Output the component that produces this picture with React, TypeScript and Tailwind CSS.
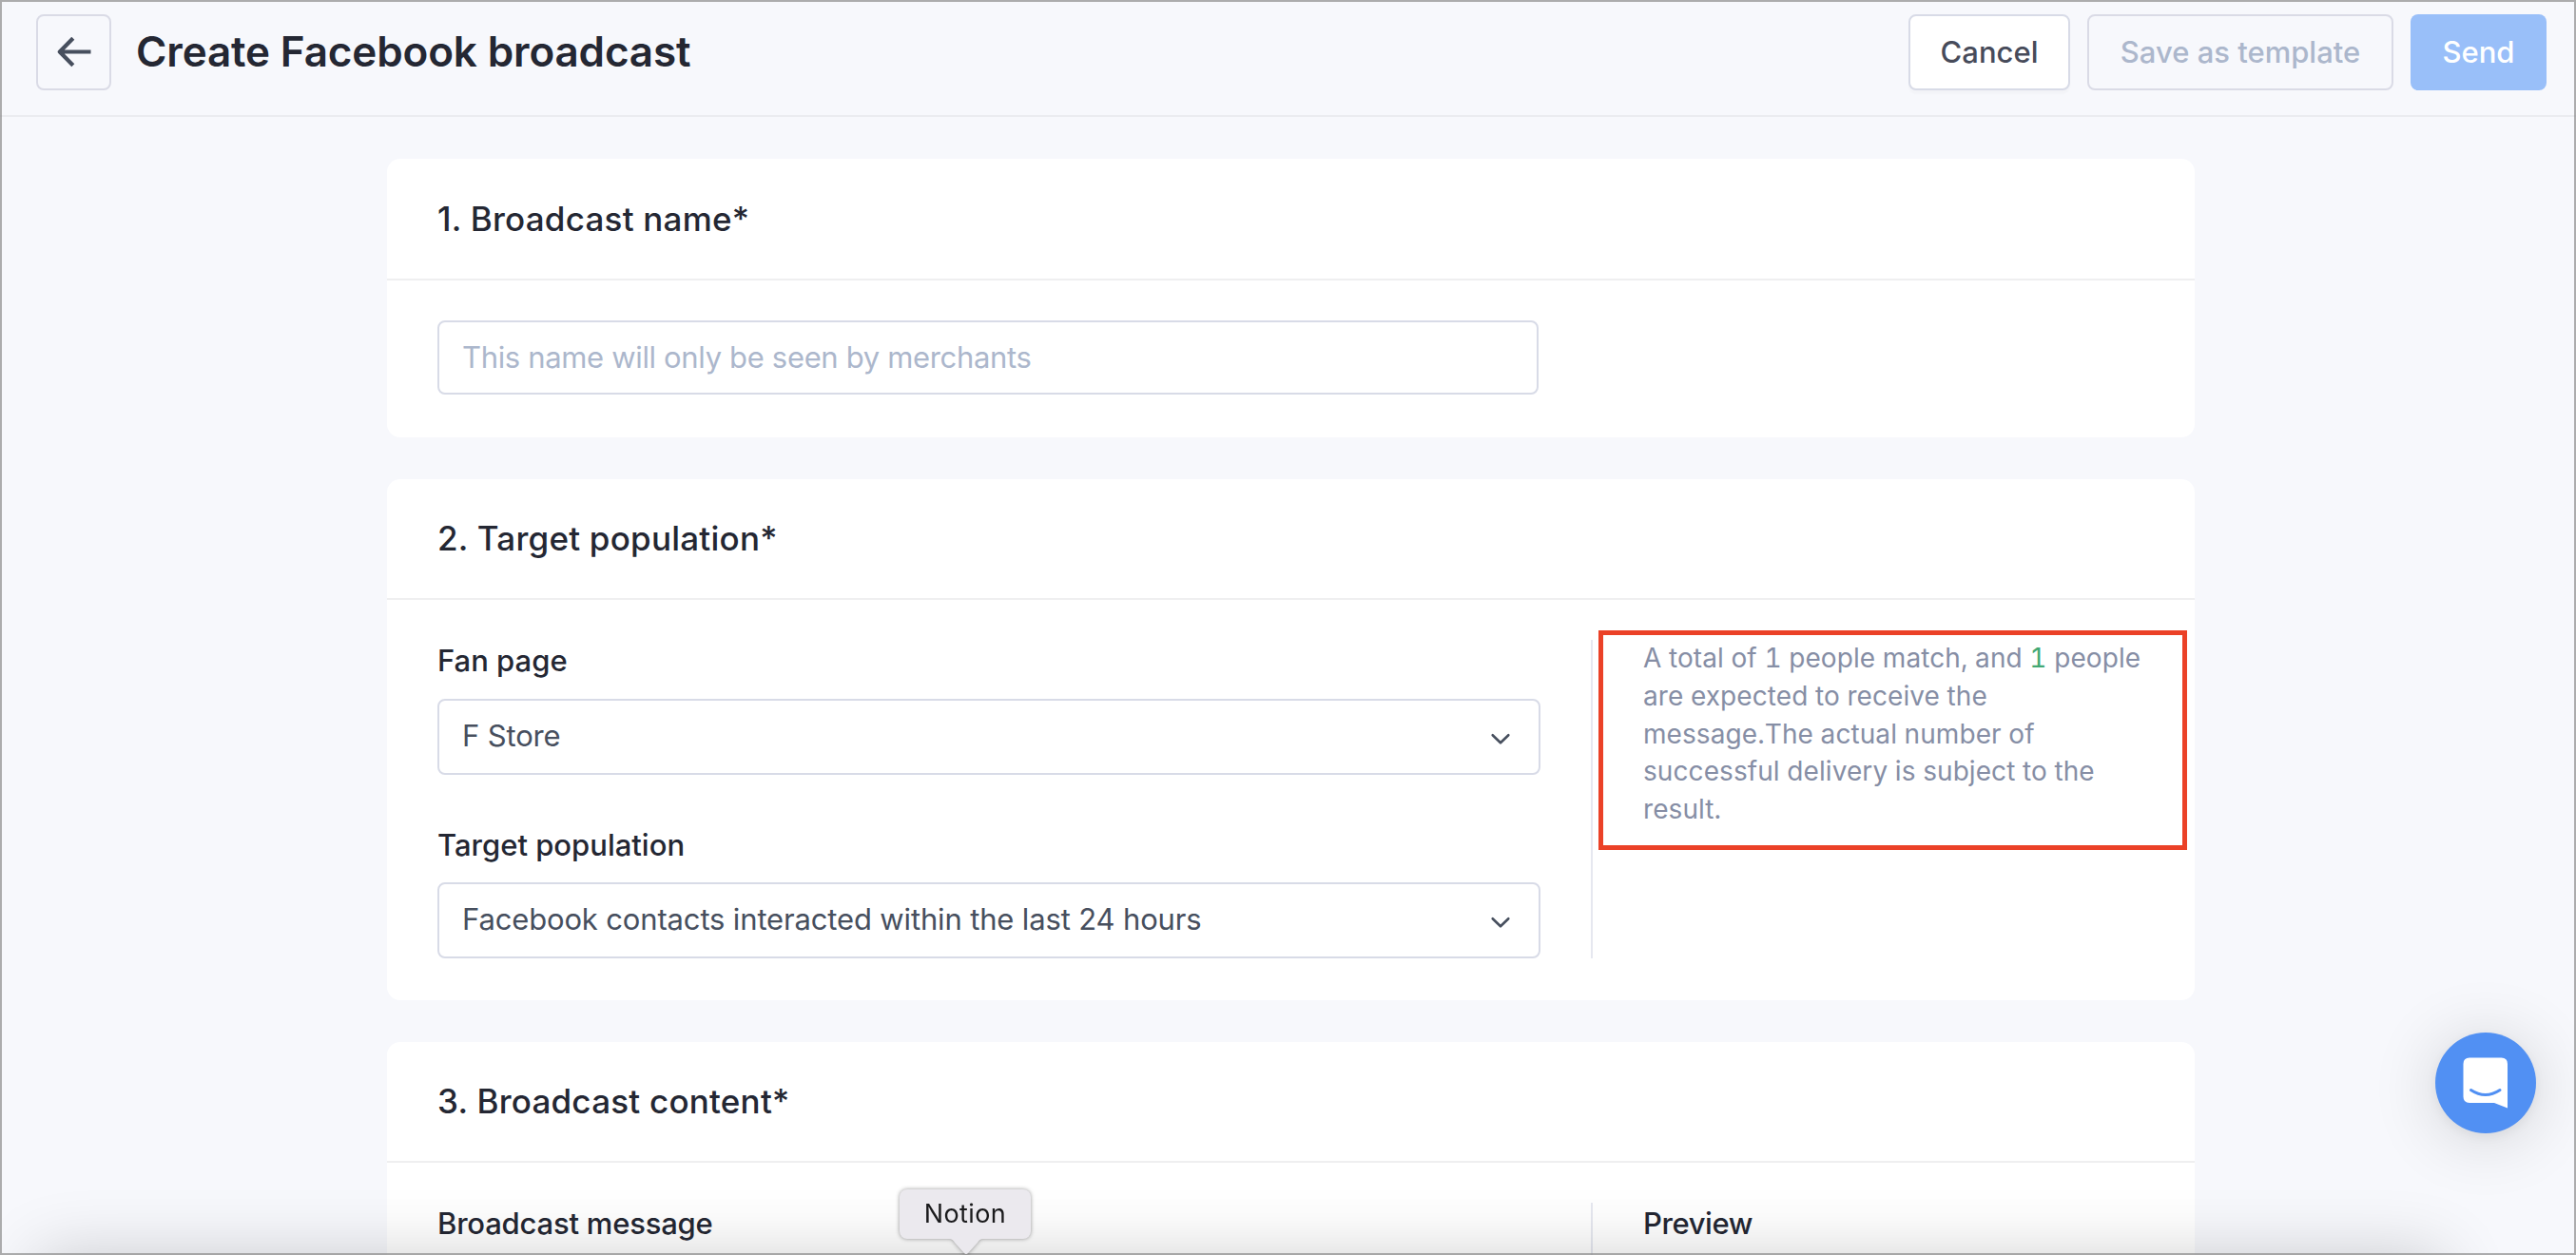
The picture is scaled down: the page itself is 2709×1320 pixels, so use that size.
import type { ReactNode } from "react";

const Chevron = () => (
  <svg
    width="22"
    height="16"
    viewBox="0 0 22 16"
    fill="none"
    stroke="#474f5e"
    strokeWidth="2.6"
    strokeLinecap="round"
    strokeLinejoin="round"
    className="mt-1.5"
  >
    <path d="M2.7 3.2 L11 11.3 L19.3 3.2" />
  </svg>
);

const Select = ({ value }: { value: string }) => (
  <button
    type="button"
    className="flex h-20 w-full items-center justify-between rounded-lg border-2 border-[#d8dbe7] bg-white pr-[29px] pl-6"
  >
    <span className="pb-0.5 text-[31px] tracking-[-0.15px] text-[#474f5e]">
      {value}
    </span>
    <Chevron />
  </button>
);

type SectionProps = {
  title: string;
  headerClass?: string;
  children: ReactNode;
};

const Section = ({
  title,
  headerClass = "h-[127px]",
  children,
}: SectionProps) => (
  <section className="rounded-[14px] bg-white">
    <div
      className={`flex items-center border-b-2 border-[#efeff0] pl-[53px] ${headerClass}`}
    >
      <h2 className="text-[35px] font-medium tracking-[0.22px]">{title}</h2>
    </div>
    {children}
  </section>
);

const Label = ({ children }: { children: ReactNode }) => (
  <p className="text-[31px] leading-[44px] font-medium">{children}</p>
);

export default function App() {
  return (
    <div className="relative h-[1320px] w-[2709px] overflow-hidden bg-[#f7f8fc] font-['Inter','Liberation_Sans',sans-serif] text-[#242733]">
      <header className="flex h-[123px] items-start border-b-2 border-[#ebecf0] pt-[15px] pr-[31px] pl-[38px]">
        <button
          type="button"
          className="flex h-20 w-[79px] items-center justify-center rounded-lg border-2 border-[#dadbe6]"
        >
          <svg
            width="36"
            height="32"
            viewBox="0 0 36 32"
            fill="none"
            stroke="#474f5e"
            strokeWidth="4.2"
            strokeLinejoin="round"
          >
            <path d="M16.8 1.2 L2.8 15.5 L16.8 29.8 M2.8 15.5 H35.5" />
          </svg>
        </button>
        <h1 className="ml-[26px] text-[44px] leading-[78px] font-semibold tracking-[-0.14px]">
          Create Facebook broadcast
        </h1>
        <div className="ml-auto flex gap-[18px] text-[31px] font-medium">
          <button
            type="button"
            className="h-20 w-[170px] rounded-lg border-2 border-[#d8dbe7] bg-white text-[#474b5a] shadow-[0_4px_2px_rgba(0,0,0,0.02)]"
          >
            Cancel
          </button>
          <button
            type="button"
            className="h-20 w-[322px] rounded-lg border-2 border-[#dadbe6] text-[#acb7cc]"
          >
            Save as template
          </button>
          <button
            type="button"
            className="h-20 w-[143px] rounded-lg bg-[#99bff9] text-white"
          >
            Send
          </button>
        </div>
      </header>

      <main className="mt-11 ml-[407px] flex w-[1901px] flex-col gap-11">
        <Section title="1. Broadcast name*" headerClass="h-32">
          <div className="px-[53px] pt-[42px] pb-[45px]">
            <input
              type="text"
              placeholder="This name will only be seen by merchants"
              className="block h-[78px] w-[1158px] rounded-lg border-2 border-[#d8dbe7] px-6 pb-0.5 text-[31px] tracking-[-0.34px] placeholder:text-[#acb7cc]"
            />
          </div>
        </Section>

        <Section title="2. Target population*">
          <div className="flex pt-[42px] pb-11 pl-[53px]">
            <div className="w-[1160px] shrink-0">
              <Label>Fan page</Label>
              <div className="mt-[18px] mb-[52px]">
                <Select value="F Store" />
              </div>
              <Label>Target population</Label>
              <div className="mt-[17px]">
                <Select value="Facebook contacts interacted within the last 24 hours" />
              </div>
            </div>
            <div className="relative ml-[53px] border-l-2 border-[#e6e8f0] pl-[53px]">
              <p className="w-[536px] text-[28px] leading-[39.75px] tracking-[0.08px] text-[#868ea5] tabular-nums">
                A total of 1 people match, and{" "}
                <span className="text-[#43a873]">1</span> people are expected to
                receive the message.The actual number of successful delivery is
                subject to the result.
              </p>
              <div className="absolute -top-2.5 left-1.5 h-[231px] w-[619px] border-[5px] border-[#eb4127]" />
            </div>
          </div>
        </Section>

        <Section title="3. Broadcast content*">
          <div className="flex pt-[42px] pl-[53px]">
            <div className="h-40 w-[1160px] shrink-0 tracking-[-0.2px]">
              <Label>Broadcast message</Label>
            </div>
            <div className="ml-[53px] border-l-2 border-[#e6e8f0] pl-[53px] tracking-[-0.4px]">
              <Label>Preview</Label>
            </div>
          </div>
        </Section>
      </main>

      {/* soft shadow cast by the dock below the window */}
      <div className="absolute top-[1320px] right-[140px] left-[40px] h-40 shadow-[0_0_70px_rgba(0,0,0,0.19)]" />

      <button
        type="button"
        className="absolute top-[1086px] left-[2561px] flex size-[106px] items-center justify-center rounded-full bg-[#5190f3] shadow-[0_4px_12px_rgba(0,0,0,0.05),0_6px_70px_rgba(0,0,0,0.16)]"
      >
        <svg width="48" height="54" viewBox="0 0 48 54">
          <path
            d="M7 0.5 H40.5 Q47 0.5 47 7 V53.5 L33 48 H7 Q0.5 48 0.5 41.5 V7 Q0.5 0.5 7 0.5 Z"
            fill="#fff"
          />
          <path
            d="M8.5 34.5 Q23.7 44.5 39 34.5"
            fill="none"
            stroke="#5190f3"
            strokeWidth="3"
            strokeLinecap="round"
          />
        </svg>
      </button>

      <div className="pointer-events-none absolute inset-0 border-2 border-[#8c8c8c]/70" />

      <div className="absolute top-[1251px] left-[946px] drop-shadow-[0_0_2px_rgba(0,0,0,0.4)]">
        <div className="flex h-[52px] w-[138px] items-center justify-center rounded-lg bg-[#ebe9ee] text-[27px] tracking-[0.4px] text-[#1a1a1c]">
          Notion
        </div>
        <svg
          width="36"
          height="17"
          viewBox="0 0 36 17"
          className="ml-[52px] block"
        >
          <path
            d="M0 0 H36 Q32 0 30 4 L20 15 Q18 17 16 15 L6 4 Q4 0 0 0 Z"
            fill="#ebe9ee"
          />
        </svg>
      </div>
    </div>
  );
}
